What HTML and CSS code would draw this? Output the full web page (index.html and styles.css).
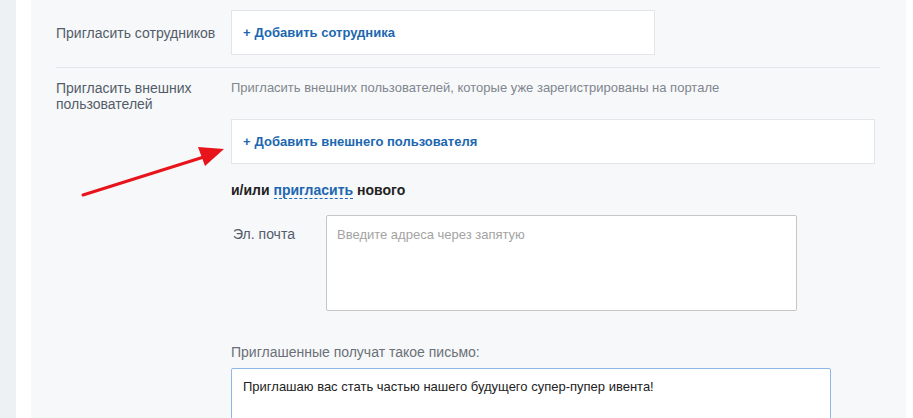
FILE: index.html
```html
<!DOCTYPE html>
<html lang="ru">
<head>
<meta charset="UTF-8" />
<meta name="viewport" content="width=device-width, initial-scale=1" />
<title>Приглашения</title>
<link rel="stylesheet" href="styles.css">
</head>
<body>

<div class="sidebar"></div>
<div class="spacer"></div>

<div class="panel">
  <div class="row first">
    <div class="label">Пригласить сотрудников</div>
    <div class="field">
      <div class="add-box short"><span class="plus">+</span> Добавить сотрудника</div>
    </div>
  </div>

  <div class="row">
    <div class="label">Пригласить внешних<br>пользователей</div>
    <div class="field">
      <div class="hint">Пригласить внешних пользователей, которые уже зарегистрированы на портале</div>
      <div class="add-box wide"><span class="plus">+</span> Добавить внешнего пользователя</div>
      <div class="or-line">и/или <span class="dashed">пригласить</span> нового</div>

      <div class="email-row">
        <div class="email-label">Эл. почта</div>
        <textarea class="email-input" placeholder="Введите адреса через запятую"></textarea>
      </div>

      <div class="letter-title">Приглашенные получат такое письмо:</div>
      <div class="letter">Приглашаю вас стать частью нашего будущего супер-пупер ивента!</div>
    </div>
  </div>

  <!-- arrow pointing at the external user button -->
  <svg class="arrow" width="160" height="60" viewBox="0 0 160 60">
    <line x1="4" y1="53" x2="128" y2="14" stroke="#e8141b" stroke-width="3" stroke-linecap="round" />
    <polygon points="145,7 119,5 126,24" fill="#e8141b" />
  </svg>
</div>

</body>
</html>
```

FILE: styles.css
```css
body {
  margin: 0;
  display: flex;
  height: 418px;
  overflow: hidden;
  background: #ffffff;
  font-family: "Liberation Sans", Arial, sans-serif;
  font-size: 13px;
  color: #333;
}
.sidebar {
  width: 16px;
  background: #eef1f4;
}
.spacer {
  width: 15px;
  background: #fff;
}
.panel {
  position: relative;
  width: 875px;
  background: #f7f8fa;
  padding: 0 26px 0 25px;
  box-sizing: border-box;
}
.row {
  display: grid;
  grid-template-columns: 175px 1fr;
  padding-top: 11px;
}
.row.first {
  padding-top: 10px;
  padding-bottom: 12px;
  border-bottom: 1px solid #e3e6ea;
  align-items: center;
}
.label {
  color: #535c69;
  font-size: 14px;
  line-height: 16px;
}
.row:not(.first) .label {
  padding-top: 1px;
}
.add-box {
  height: 43px;
  background: #fff;
  border: 1px solid #e3e5e8;
  display: flex;
  align-items: center;
  padding-left: 11px;
  font-weight: bold;
  color: #2067b0;
}
.add-box.short {
  width: 411px;
}
.add-box.wide {
  width: 631px;
  margin-top: 23px;
}
.plus {
  margin-right: 4px;
}
.hint {
  color: #80868e;
  line-height: 16px;
  padding-top: 1px;
}
.or-line {
  margin-top: 18px;
  font-size: 14px;
  font-weight: bold;
  color: #222;
  line-height: 16px;
}
.dashed {
  color: #2067b0;
  border-bottom: 1px dashed #2067b0;
}
.email-row {
  display: flex;
  margin-top: 17px;
}
.email-label {
  width: 93px;
  padding-left: 2px;
  padding-top: 11px;
  font-size: 14px;
  color: #535c69;
}
.email-input {
  width: 471px;
  height: 96px;
  box-sizing: border-box;
  border: 1px solid #c6c6c6;
  border-radius: 2px;
  padding: 11px 10px;
  font-family: "Liberation Sans", Arial, sans-serif;
  font-size: 13px;
  resize: none;
  background: #fff;
}
.email-input::placeholder {
  color: #a3a3a3;
}
.letter-title {
  margin-top: 33px;
  font-size: 14px;
  color: #6b7078;
  line-height: 16px;
}
.letter {
  margin-top: 8px;
  width: 600px;
  height: 70px;
  box-sizing: border-box;
  background: #fff;
  border: 1px solid #8fb6e8;
  border-radius: 2px;
  padding: 10px 11px;
  color: #222;
}
.arrow {
  position: absolute;
  left: 48px;
  top: 142px;
}
```
